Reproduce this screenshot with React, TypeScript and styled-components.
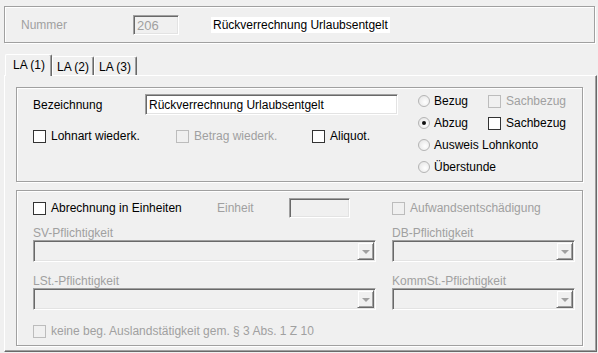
import React from "react";
import styled, { createGlobalStyle, css } from "styled-components";

const GlobalStyle = createGlobalStyle`
  html, body { margin: 0; padding: 0; background: #f0f0f0; }
  body { font-family: "Liberation Sans", Arial, sans-serif; font-size: 12px; color: #000; }
  * { box-sizing: border-box; }
`;

const DISABLED = "#a0a0a0";

const Window = styled.div`
  width: 598px;
  height: 353px;
  padding: 6px 0 0 4px;
  background: #f0f0f0;
  overflow: hidden;
`;

const etched = css`
  border: 1px solid #a0a0a0;
  box-shadow: inset 1px 1px 0 #fff, 1px 1px 0 #fff;
`;

const sunken = css`
  border-top: 1px solid #a0a0a0;
  border-left: 1px solid #a0a0a0;
  border-right: 1px solid #fff;
  border-bottom: 1px solid #fff;
  box-shadow: inset 1px 1px 0 #696969, inset -1px -1px 0 #e3e3e3;
`;

const HeaderGroup = styled.div`
  ${etched};
  width: 591px;
  height: 37px;
  display: flex;
  align-items: center;
  padding: 0 0 0 16px;
`;

const Label = styled.span<{ $disabled?: boolean; $w?: number }>`
  display: inline-block;
  white-space: nowrap;
  line-height: 14px;
  color: ${(p) => (p.$disabled ? DISABLED : "#000")};
  ${(p) => (p.$w ? `width: ${p.$w}px; flex: none;` : "")}
`;

const NumberBox = styled.div`
  ${sunken};
  width: 46px;
  height: 20px;
  padding: 2px 0 0 3px;
  color: ${DISABLED};
  line-height: 15px;
  font-size: 13px;
`;

const Title = styled.span`
  margin-left: 32px;
  background: #fff;
  padding: 1px 2px;
  line-height: 14px;
  margin-top: 1px;
`;

const TabStrip = styled.div`
  display: flex;
  align-items: flex-end;
  margin-top: 11px;
  height: 21px;
  padding-left: 1px;
`;

const Tab = styled.div<{ $active?: boolean; $w: number }>`
  width: ${(p) => p.$w}px;
  height: ${(p) => (p.$active ? 22 : 19)}px;
  margin-bottom: ${(p) => (p.$active ? -1 : 0)}px;
  position: ${(p) => (p.$active ? "relative" : "static")};
  z-index: ${(p) => (p.$active ? 1 : 0)};
  background: #f0f0f0;
  border-top: 1px solid #fff;
  border-left: 1px solid #fff;
  border-right: 1px solid #696969;
  box-shadow: inset -1px 0 0 #a0a0a0;
  border-radius: 2px 2px 0 0;
  padding: ${(p) => (p.$active ? "3px 0 0 7px" : "3px 0 0 4px")};
  line-height: 14px;
  white-space: nowrap;
`;

const TabPage = styled.div`
  width: 593px;
  height: 277px;
  border-top: 1px solid #fff;
  border-left: 1px solid #fff;
  border-right: 1px solid #696969;
  border-bottom: 1px solid #696969;
  box-shadow: inset -1px -1px 0 #a0a0a0;
  padding: 11px 0 0 11px;
  display: flex;
  flex-direction: column;
`;

const Group = styled.div<{ $h: number }>`
  ${etched};
  width: 567px;
  height: ${(p) => p.$h}px;
  flex: none;
`;

const Group1 = styled(Group)`
  display: flex;
  padding: 0 0 0 16px;
`;

const LeftCol = styled.div`
  width: 385px;
  flex: none;
  display: flex;
  flex-direction: column;
  padding-top: 6px;
`;

const Row = styled.div<{ $mt?: number }>`
  display: flex;
  align-items: center;
  margin-top: ${(p) => p.$mt ?? 0}px;
`;

const TextInput = styled.div<{ $w: number; $h: number; $disabled?: boolean }>`
  ${sunken};
  width: ${(p) => p.$w}px;
  height: ${(p) => p.$h}px;
  background: ${(p) => (p.$disabled ? "#f0f0f0" : "#fff")};
  padding: 3px 0 0 3px;
  line-height: 14px;
  white-space: nowrap;
  overflow: hidden;
  flex: none;
`;

const CheckItem = styled.label<{ $w?: number }>`
  display: flex;
  align-items: center;
  gap: 5px;
  ${(p) => (p.$w ? `width: ${p.$w}px; flex: none;` : "")}
`;

const Box = styled.span<{ $disabled?: boolean }>`
  width: 13px;
  height: 13px;
  flex: none;
  border: 1px solid ${(p) => (p.$disabled ? "#bcbcbc" : "#333")};
  background: ${(p) => (p.$disabled ? "#f0f0f0" : "#fff")};
`;

const RightGrid = styled.div`
  display: grid;
  grid-template-columns: 70px auto;
  grid-auto-rows: 22px;
  padding-top: 2px;
  align-items: center;
`;

const RadioItem = styled.label`
  display: flex;
  align-items: center;
  gap: 4px;
`;

const Group2 = styled(Group)`
  margin-top: 8px;
  padding: 7px 0 0 16px;
  display: grid;
  grid-template-columns: 342px 183px;
  column-gap: 17px;
  grid-template-rows: 20px auto 22px auto 22px auto;
  align-content: start;
`;

const FieldLabel = styled(Label)<{ $mt: number }>`
  margin-top: ${(p) => p.$mt}px;
`;

const ComboBox = styled.div<{ $w: number }>`
  ${sunken};
  width: ${(p) => p.$w}px;
  height: 22px;
  display: flex;
  justify-content: flex-end;
  align-items: flex-start;
  padding: 1px 1px 0 0;
`;

const ComboButton = styled.span`
  width: 17px;
  height: 18px;
  background: #f0f0f0;
  border-top: 1px solid #f0f0f0;
  border-left: 1px solid #f0f0f0;
  border-right: 1px solid #696969;
  border-bottom: 1px solid #696969;
  box-shadow: inset 1px 1px 0 #fff, inset -1px -1px 0 #a0a0a0;
  display: flex;
  align-items: center;
  justify-content: center;
`;

const Arrow = styled.span`
  width: 0;
  height: 0;
  border-left: 4px solid transparent;
  border-right: 4px solid transparent;
  border-top: 4px solid ${DISABLED};
  margin-top: 1px;
`;

const BottomCheck = styled.div`
  grid-column: 1 / span 2;
  margin-top: 14px;
`;

const Radio: React.FC<{ checked?: boolean }> = ({ checked }) => (
  <svg width="12" height="12" viewBox="0 0 12 12" style={{ flex: "none" }}>
    <defs>
      <radialGradient id="rg" cx="0.6" cy="0.6" r="0.7">
        <stop offset="0" stopColor="#ffffff" />
        <stop offset="1" stopColor="#e4e4e4" />
      </radialGradient>
    </defs>
    <circle cx="6" cy="6" r="5.5" fill="url(#rg)" stroke="#b4b4b4" />
    {checked && <circle cx="6" cy="6" r="2" fill="#111" />}
  </svg>
);

const Check: React.FC<{ label: string; disabled?: boolean; w?: number }> = ({ label, disabled, w }) => (
  <CheckItem $w={w}>
    <Box $disabled={disabled} />
    <Label $disabled={disabled}>{label}</Label>
  </CheckItem>
);

const Combo: React.FC<{ w: number }> = ({ w }) => (
  <ComboBox $w={w}>
    <ComboButton>
      <Arrow />
    </ComboButton>
  </ComboBox>
);

export default function App() {
  return (
    <>
      <GlobalStyle />
      <Window>
        <HeaderGroup>
          <Label $disabled $w={112}>Nummer</Label>
          <NumberBox>206</NumberBox>
          <Title>Rückverrechnung Urlaubsentgelt</Title>
        </HeaderGroup>

        <TabStrip>
          <Tab $active $w={47}>LA (1)</Tab>
          <Tab $w={42}>LA (2)</Tab>
          <Tab $w={43}>LA (3)</Tab>
        </TabStrip>

        <TabPage>
          <Group1 $h={95}>
            <LeftCol>
              <Row>
                <Label $w={112}>Bezeichnung</Label>
                <TextInput $w={253} $h={21}>Rückverrechnung Urlaubsentgelt</TextInput>
              </Row>
              <Row $mt={14}>
                <Check label="Lohnart wiederk." w={143} />
                <Check label="Betrag wiederk." disabled w={136} />
                <Check label="Aliquot." />
              </Row>
            </LeftCol>
            <RightGrid>
              <RadioItem><Radio /><Label>Bezug</Label></RadioItem>
              <Check label="Sachbezug" disabled />
              <RadioItem><Radio checked /><Label>Abzug</Label></RadioItem>
              <Check label="Sachbezug" />
              <RadioItem><Radio /><Label>Ausweis Lohnkonto</Label></RadioItem>
              <span />
              <RadioItem><Radio /><Label>Überstunde</Label></RadioItem>
              <span />
            </RightGrid>
          </Group1>

          <Group2 $h={156}>
            <Row>
              <Check label="Abrechnung in Einheiten" w={184} />
              <Label $disabled $w={72}>Einheit</Label>
              <TextInput $w={61} $h={20} $disabled />
            </Row>
            <Row>
              <Check label="Aufwandsentschädigung" disabled />
            </Row>
            <FieldLabel $disabled $mt={8}>SV-Pflichtigkeit</FieldLabel>
            <FieldLabel $disabled $mt={8}>DB-Pflichtigkeit</FieldLabel>
            <Combo w={343} />
            <Combo w={183} />
            <FieldLabel $disabled $mt={12}>LSt.-Pflichtigkeit</FieldLabel>
            <FieldLabel $disabled $mt={12}>KommSt.-Pflichtigkeit</FieldLabel>
            <Combo w={343} />
            <Combo w={183} />
            <BottomCheck>
              <Check label="keine beg. Auslandstätigkeit gem. § 3 Abs. 1 Z 10" disabled />
            </BottomCheck>
          </Group2>
        </TabPage>
      </Window>
    </>
  );
}
